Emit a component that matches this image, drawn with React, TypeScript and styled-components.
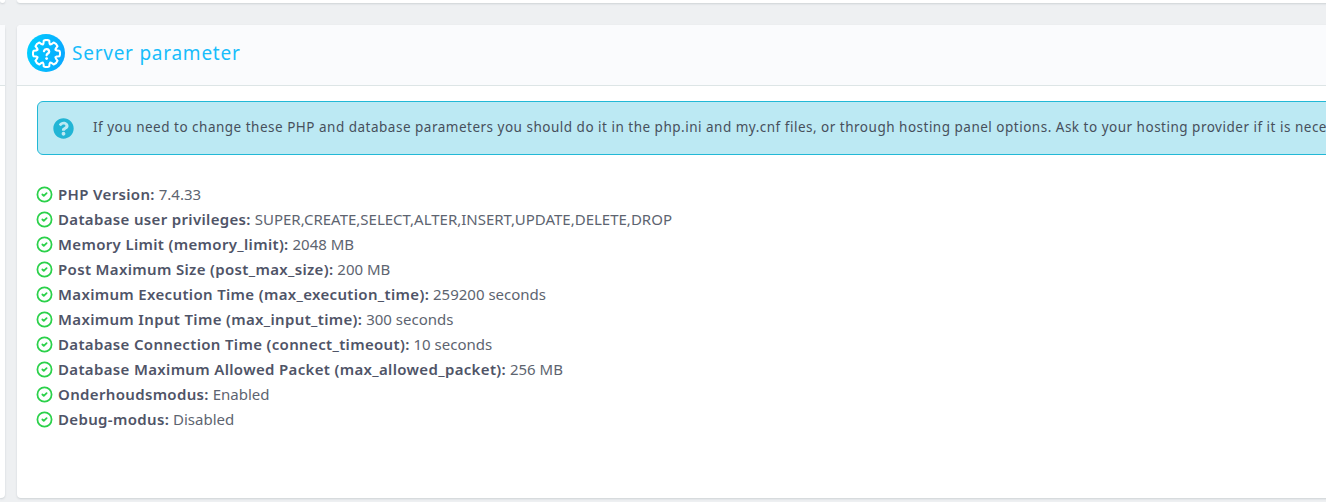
import React from "react";
import styled, { createGlobalStyle } from "styled-components";
import { FaQuestionCircle } from "react-icons/fa";
import { CircleCheck } from "lucide-react";

const GlobalStyle = createGlobalStyle`
    html, body {
        margin: 0;
        padding: 0;
        height: 502px;
        overflow: hidden;
        background-color: #eef0f2;
    }
    body {
        font-family: "Noto Sans", "Open Sans", sans-serif;
        color: #4f5467;
    }
`;

const Page = styled.div`
    display: grid;
    grid-template-columns: 5px 1420px;
    grid-template-rows: 3px 473px;
    column-gap: 12px;
    row-gap: 22px;
`;

const Card = styled.div`
    background-color: #fff;
    box-shadow: 0 1px 2px rgba(60, 80, 90, 0.18);
    border-radius: 0 0 4px 4px;
`;

const SideCard = styled(Card)`
    display: flex;
    flex-direction: column;
    border-radius: 0 4px 4px 0;
`;

const SideHeader = styled.div`
    height: 60px;
    flex: none;
    background-color: #fafbfd;
    border-bottom: 1px solid #dde5e6;
`;

const MainCard = styled(Card)`
    border-radius: 4px;
    overflow: hidden;
`;

const Header = styled.div`
    display: flex;
    align-items: center;
    gap: 7px;
    height: 60px;
    padding-left: 10px;
    background-color: #fafbfd;
    border-bottom: 1px solid #dde5e6;
`;

const Badge = styled.span`
    display: flex;
    align-items: center;
    justify-content: center;
    width: 38px;
    height: 38px;
    margin-top: -4px;
    border-radius: 50%;
    background: linear-gradient(100deg, #00d0ff, #0aa5ff);
`;

const Title = styled.h2`
    margin: 0 0 4px;
    font-size: 19px;
    font-weight: 400;
    letter-spacing: 0.75px;
    color: #17bdfb;
`;

const Body = styled.div`
    padding: 15px 20px;
`;

const Alert = styled.div`
    display: flex;
    align-items: center;
    gap: 19px;
    height: 54px;
    box-sizing: border-box;
    padding-left: 15px;
    border: 1px solid #22b8d6;
    border-radius: 6px;
    background-color: #bce9f3;
    font-size: 13.5px;
    letter-spacing: 0.5px;
    white-space: nowrap;
    color: #47505c;
`;

const AlertText = styled.span`
    margin-top: -2px;
`;

const AlertIcon = styled(FaQuestionCircle)`
    flex: none;
    width: 21px;
    height: 21px;
    color: #22b5d5;
`;

const ParamList = styled.ul`
    list-style: none;
    margin: 27px 0 0;
    padding: 0;
`;

const ParamRow = styled.li`
    display: flex;
    align-items: center;
    gap: 5px;
    height: 25px;
    font-size: 15px;
    white-space: nowrap;
    color: #5d6470;
`;

const RowText = styled.span`
    margin-top: -2px;
`;

const OkIcon = styled(CircleCheck)`
    flex: none;
    width: 17px;
    height: 17px;
    margin-left: -1px;
    color: #2bd14a;
`;

const ParamName = styled.b`
    font-weight: 600;
    letter-spacing: 0.34px;
    color: #4f5467;
`;

const params: [string, string][] = [
    ["PHP Version", "7.4.33"],
    ["Database user privileges", "SUPER,CREATE,SELECT,ALTER,INSERT,UPDATE,DELETE,DROP"],
    ["Memory Limit (memory_limit)", "2048 MB"],
    ["Post Maximum Size (post_max_size)", "200 MB"],
    ["Maximum Execution Time (max_execution_time)", "259200 seconds"],
    ["Maximum Input Time (max_input_time)", "300 seconds"],
    ["Database Connection Time (connect_timeout)", "10 seconds"],
    ["Database Maximum Allowed Packet (max_allowed_packet)", "256 MB"],
    ["Onderhoudsmodus", "Enabled"],
    ["Debug-modus", "Disabled"],
];

// eight-toothed outline around the centre of a 24 box
const gearPath = () => {
    const pt = (r: number, deg: number) => {
        const a = (deg * Math.PI) / 180;
        return `${(12 + r * Math.cos(a)).toFixed(2)} ${(12 + r * Math.sin(a)).toFixed(2)}`;
    };
    let d = "";
    for (let i = 0; i < 8; i++) {
        const c = i * 45 - 90;
        d += `${i === 0 ? "M" : "L"}${pt(8, c - 22.5)} Q${pt(8.4, c - 16)} ${pt(10.9, c - 12)} Q${pt(11.8, c)} ${pt(10.9, c + 12)} Q${pt(8.4, c + 16)} ${pt(8, c + 22.5)} `;
    }
    return d + "Z";
};

const GearQuestion = () => (
    <svg width="29" height="29" viewBox="0 0 24 24" fill="none" stroke="#fff" strokeWidth="1.7" strokeLinecap="round" strokeLinejoin="round">
        <path d={gearPath()} />
        <path d="M9.9 10a2.2 2.2 0 0 1 4.3.5c0 1.4-2.1 1.6-2.1 3" strokeWidth="1.9" />
        <path d="M12.1 16.2h.01" strokeWidth="2.3" />
    </svg>
);

const App: React.FC = () => {
    return (
        <>
            <GlobalStyle />
            <Page>
                <Card />
                <Card />
                <SideCard>
                    <SideHeader />
                </SideCard>
                <MainCard>
                    <Header>
                        <Badge><GearQuestion /></Badge>
                        <Title>Server parameter</Title>
                    </Header>
                    <Body>
                        <Alert>
                            <AlertIcon />
                            <AlertText>If you need to change these PHP and database parameters you should do it in the php.ini and my.cnf files, or through hosting panel options. Ask to your hosting provider if it is necessary.</AlertText>
                        </Alert>
                        <ParamList>
                            {params.map(([name, value]) => (
                                <ParamRow key={name}>
                                    <OkIcon strokeWidth={2.5} />
                                    <RowText><ParamName>{name}:</ParamName> {value}</RowText>
                                </ParamRow>
                            ))}
                        </ParamList>
                    </Body>
                </MainCard>
            </Page>
        </>
    );
};

export default App;
